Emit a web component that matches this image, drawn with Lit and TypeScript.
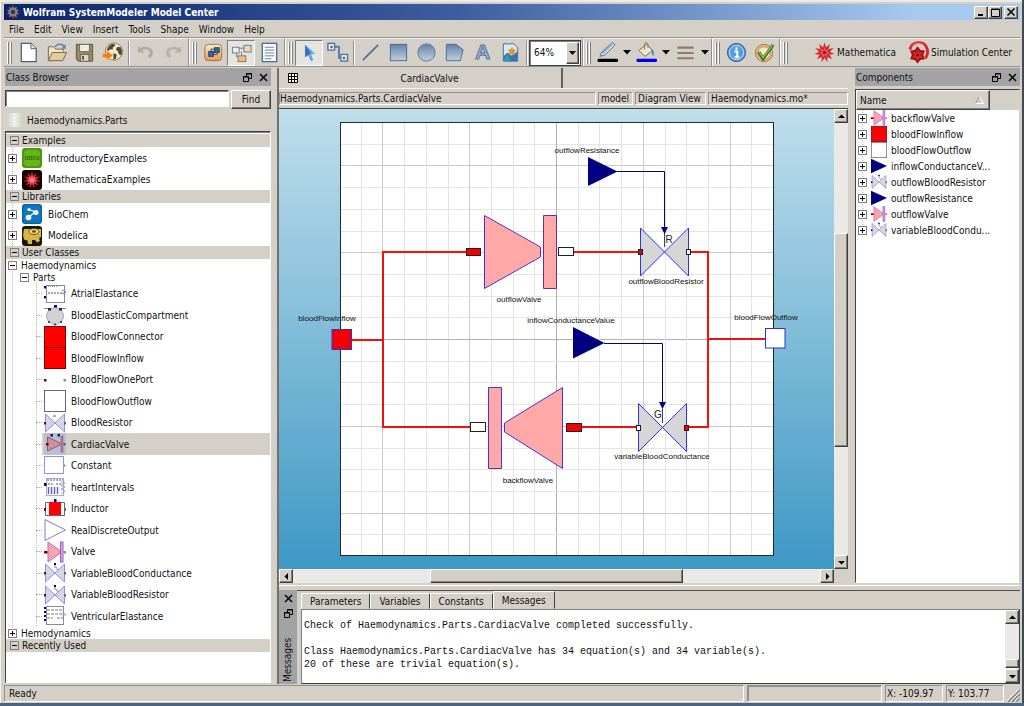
import { LitElement, html, svg, css, TemplateResult, SVGTemplateResult } from "lit";
import { customElement, property, state } from "lit/decorators.js";
import { classMap } from "lit/directives/class-map.js";

/* ---------- toolbar icons, 24 x 24 ---------- */
const shade = svg`<defs>
  <linearGradient id="steel" x1="0" y1="0" x2="0" y2="1"><stop offset="0" stop-color="#5f83aa"/><stop offset="1" stop-color="#c3d0de"/></linearGradient>
  <linearGradient id="tan" x1="0" y1="0" x2="0" y2="1"><stop offset="0" stop-color="#fbe9d0"/><stop offset="1" stop-color="#e39a55"/></linearGradient>
</defs>`;

const spikes = (cx: number, cy: number, r: number, inner: number, n: number): string =>
  Array.from({ length: n * 2 }, (_, i) => {
    const a = (Math.PI * i) / n - Math.PI / 2;
    const q = i % 2 ? inner : r;
    return `${(cx + q * Math.cos(a)).toFixed(2)},${(cy + q * Math.sin(a)).toFixed(2)}`;
  }).join(" ");

const toolIcons: Record<string, SVGTemplateResult> = {
  newfile: svg`<path d="M4.500 2.500H14.500L20 8V21.500H4.500Z" fill="#fff" stroke="#4a5f78" stroke-width="1.300"/><path d="M14.500 2.500V8H20" fill="#dbe5ee" stroke="#4a5f78"/>`,
  open: svg`<path d="M3.500 20.500V6H9l2 2.500h8V11" fill="#f3e6c4" stroke="#6c6a55"/><path d="M3.500 20.500L7.500 12H22.500L18.500 20.500Z" fill="#e4cb98" stroke="#6c6a55"/><path d="M10.500 6C13 2.500 18 2.500 20 5.500" fill="none" stroke="#5b80a8" stroke-width="1.500"/><path d="M21.500 3V8H17Z" fill="#5b80a8"/>`,
  save: svg`<path d="M3.500 3.500H20.500V21H5.500L3.500 19Z" fill="#958767" stroke="#5e543e"/><rect x="7" y="3.500" width="10" height="7.500" fill="#efece2" stroke="#5e543e" stroke-width=".7"/><rect x="8" y="14" width="8.500" height="7" fill="#dcd8c8" stroke="#5e543e" stroke-width=".7"/><rect x="9.500" y="15.500" width="2" height="4" fill="#5e543e"/>`,
  globe: svg`<circle cx="13.500" cy="11" r="9" fill="#f5ead0" stroke="#8c7c58"/><path d="M8 5.500C10 3.500 12 2.800 14 3L15 5L12.500 6.500L12 9L9.500 8.500L7.500 10.500L6 9Z" fill="#57482b"/><path d="M17 6L20.500 6.500C22 9 22.500 12 21 15L18.500 13.500L17.500 10.500L15.500 9Z" fill="#57482b"/><path d="M13 12.500L16.500 14L15.500 18.500L13 19.500Z" fill="#57482b"/><path d="M1.500 13H6V10L12.500 15L6 20.500V17.500H1.500Z" fill="#f77a18" stroke="#fbd0a0" stroke-width=".6"/>`,
  undo: svg`<path d="M4 5V12H11L8.500 9.500C12 7.500 16 8.500 16.500 12C16.500 14 15 15 14 15.500L16 18C19 16.500 20.500 14 19.500 10.500C18 6 11 4.500 6.500 7.500Z" fill="#adaba6"/>`,
  redo: svg`<path d="M20 5V12H13L15.500 9.500C12 7.500 8 8.500 7.500 12C7.500 14 9 15 10 15.500L8 18C5 16.500 3.500 14 4.500 10.500C6 6 13 4.500 17.500 7.500Z" fill="#b4b2ad"/>`,
  iconview: svg`<rect x="3" y="3.500" width="17.500" height="17" rx="3.500" fill="url(#tan)" stroke="#a2713f"/><rect x="7" y="11" width="5" height="5" fill="#3d648f" stroke="#24476d"/><rect x="13" y="7" width="5" height="5" fill="#3d648f" stroke="#24476d"/><path d="M9.500 11V8.500H13M12 14H16V12" fill="none" stroke="#24476d"/>`,
  diagview: svg`<path d="M7 11V16.500H11M9 7.500H15M12 15V11" fill="none" stroke="#5b7ea4"/><rect x="2.500" y="6.500" width="7" height="6" fill="#f8ecd9" stroke="#5b7ea4"/><rect x="14.500" y="4.500" width="7.500" height="7" fill="#f6d3a8" stroke="#5b7ea4"/><rect x="8.500" y="15.500" width="8" height="6" fill="#f1bd80" stroke="#8e7148"/>`,
  textview: svg`<rect x="4.500" y="2.500" width="15" height="19" fill="#fff" stroke="#4a6c92" stroke-width="1.400"/><path d="M7 6.500H17M7 9.500H17M7 12.500H17M7 15.500H17M7 18.500H14" stroke="#5b7ea4"/>`,
  select: svg`<path d="M7 3L7 18L10.500 15L13 21.500L16.500 20L14 14L18.500 13.500Z" fill="#5aa0e8" stroke="#dcebfa" stroke-width=".8"/><path d="M7.500 4L7.500 17L10.500 14.500L13 13Z" fill="#3b6fae"/>`,
  connect: svg`<path d="M8 6H13.500V17.500H17" fill="none" stroke="#5b7ea4" stroke-width="2"/><rect x="2" y="2.500" width="7" height="7" fill="#e8eff6" stroke="#4a6c92" stroke-width="1.300"/><rect x="4.500" y="5" width="2.500" height="2.500" fill="#4a6c92"/><rect x="15.500" y="14" width="7" height="7" fill="#e8eff6" stroke="#4a6c92" stroke-width="1.300"/><rect x="17.500" y="16.500" width="2.500" height="2.500" fill="#4a6c92"/>`,
  line: svg`<path d="M4 20L20 4" stroke="#4a6c92" stroke-width="1.600"/>`,
  rect: svg`<rect x="3.500" y="3.500" width="17" height="17" fill="url(#steel)" stroke="#4a6c92"/>`,
  ellipse: svg`<circle cx="12" cy="12" r="9" fill="url(#steel)" stroke="#54779f"/>`,
  polygon: svg`<path d="M3.500 3.500H13.500L21 9L18 20.500H3.500Z" fill="url(#steel)" stroke="#4a6c92"/>`,
  text: svg`<text class="glyph" x="12" y="19" text-anchor="middle">A</text>`,
  bitmap: svg`<path d="M4.500 3H15.500L19.500 7V21H4.500Z" fill="#d8e8f5" stroke="#4a6c92"/><path d="M4.500 16L9 12L13 15L19.500 11V21H4.500Z" fill="#3b73ad"/><path d="M4.500 20L9 14L12 21H4.500Z" fill="#2d9fb0"/><path d="M13.500 6L15 8.500L18 9L16 11.500L16.500 14.500L13.500 13.500L10.500 14.500L11 11.500L9 9L12 8.500Z" fill="#d99a2b"/>`,
  pen: svg`<path d="M4 16L6 11.500L17 1.500L20 4L9.500 14.500Z" fill="#d9e3ee" stroke="#56708e"/><path d="M6 12L16.500 2.500L18 3.500L7.500 13.500Z" fill="#8ea9c7"/><rect x="1.500" y="18.500" width="21.500" height="3.500" rx="1.500" fill="#000"/>`,
  bucket: svg`<path d="M4 10L12 3.500L18.500 10L10.500 16Z" fill="#f0e4cc" stroke="#7a6b4d"/><path d="M10 9V4C10 1 13 1 13.500 4V7" fill="none" stroke="#7a6b4d"/><path d="M17 8C20 9 20 13 19.500 15.500C17.500 15 17.500 11 17 8" fill="#4f86c6"/><rect x="1.500" y="18.500" width="21.500" height="3.500" rx="1.500" fill="#0000f0"/>`,
  lines: svg`<path d="M3.500 7H20.500M3.500 12.500H20.500M3.500 18H20.500" stroke="#8a7d66" stroke-width="2.300"/>`,
  info: svg`<circle cx="12" cy="12" r="9.500" fill="#4d8fd6" stroke="#2d5f9c"/><circle cx="12" cy="12" r="7.500" fill="#5a9ce0" stroke="#cfe2f6"/><path d="M12 6.500V9M10 11H12.800V17M10 17H15" stroke="#fff" stroke-width="2" fill="none"/>`,
  check: svg`<circle cx="11.500" cy="12.500" r="9" fill="#e8b77c" stroke="#a5753f"/><circle cx="11.500" cy="12.500" r="6.500" fill="#f7e6cd" stroke="#c18f55"/><path d="M6 11.500L10.500 18.500L21 4" fill="none" stroke="#2b6a1e" stroke-width="3.400"/><path d="M6.500 12L10.500 17.500L20.500 4.500" fill="none" stroke="#7ec04c" stroke-width="1.500"/>`,
  mathematica: svg`<polygon points=${spikes(12, 12, 10.5, 5.5, 11)} fill="#d4242a"/><polygon points=${spikes(12, 12, 6, 2.5, 7)} fill="#f0696a"/><circle cx="12" cy="12" r="2" fill="#b3161c"/>`,
  simcenter: svg`<path d="M3 9C5 0 18 -1 21 8C22.500 13 20 17 19 18" fill="none" stroke="#d8242a" stroke-width="3"/><path d="M5 6C8 1.500 15 1.500 18 5" fill="none" stroke="#f59a9a"/><polygon points=${spikes(11, 14.5, 9, 6, 6)} fill="#a51017"/><polygon points=${spikes(11, 14.5, 6, 3, 6)} fill="#d42a30"/><circle cx="11" cy="14.500" r="1.500" fill="#6e070b"/>`,
};

/* ---------- class icons, 22 x 22 ---------- */
const bowtie = (mark: SVGTemplateResult) => svg`
  <path d="M1.500 2L11 11L1.500 20ZM20.500 2L11 11L20.500 20Z" fill="#d6d6e2" stroke="#8f8ff0"/>
  <rect y="10" width="2" height="2.500" fill="#700"/><rect x="20" y="10" width="2" height="2.500" fill="#667"/>${mark}`;
const port = svg`<rect x="10" y="1" width="2" height="2" fill="#000080"/><path d="M11 3V6M12 5L14 8" stroke="#667" stroke-width=".8"/>`;

const classIcons: Record<string, SVGTemplateResult> = {
  intro: svg`<rect x="1" y="1" width="20" height="20" rx="3" fill="#4b9a0c"/><rect x="3" y="3" width="16" height="16" rx="4" fill="#68b41c"/><text class="mini" x="11" y="13" text-anchor="middle">intro</text>`,
  mathex: svg`<rect x="1" y="1" width="20" height="20" rx="3" fill="#160404"/><polygon points=${spikes(11, 11, 8.5, 4.2, 11)} fill="#e02a30"/><polygon points=${spikes(11, 11, 4.5, 2, 7)} fill="#f58a8a"/>`,
  biochem: svg`<rect x="1" y="1" width="20" height="20" rx="3" fill="#0c63a8"/><rect x="2.500" y="2.500" width="17" height="17" rx="3" fill="#1178c0"/><path d="M8 6.500L14.500 9L7.500 14" fill="none" stroke="#fff" stroke-width="1.200"/><circle cx="8" cy="6.500" r="1.600" fill="#fff"/><circle cx="15" cy="9.500" r="2.500" fill="#fff"/><circle cx="7.500" cy="14.500" r="2.800" fill="#fff"/>`,
  modelica: svg`<rect x="1" y="1" width="20" height="20" rx="3" fill="#1c1704"/><path d="M3 4H20V12L18 13L19 16L16 17.500L14 15H11L11 19L7 19L6.500 15.500L3 14.500L2 10Z" fill="#d5b545"/><ellipse cx="13" cy="6.500" rx="5" ry="3" fill="#efd98a" stroke="#6b5510"/><ellipse cx="13" cy="6.500" rx="2" ry="1.200" fill="#5b480c"/>`,
  atrial: svg`<rect x="2.500" y="2.500" width="18" height="17" fill="#fff" stroke="#889"/><path d="M4 10H18" stroke="#555" stroke-dasharray="2 1"/><path d="M4 3.500H13" stroke="#99a" stroke-dasharray="1 1"/><rect x="0" y="3" width="2" height="2.500" fill="#000080"/><rect x="0" y="13" width="2" height="2.500" fill="#000080"/><path d="M18 7L22 9L18 11" fill="none" stroke="#77f"/>`,
  elastic: svg`<path d="M0 4.500H22" stroke="#88a" stroke-dasharray="5 1"/><circle cx="11" cy="12" r="8.500" fill="#d2d2d2" stroke="#aaa"/><rect x="10" y="1" width="3" height="2.500" fill="#000080"/><rect x="4" y="4" width="3" height="2.500" fill="#24246a"/><rect x="15" y="4" width="3" height="2.500" fill="#24246a"/><rect x="4" y="17" width="2" height="2" fill="#447"/><rect x="16" y="17" width="2" height="2" fill="#447"/><rect x="10" y="19.500" width="2" height="2" fill="#447"/>`,
  red: svg`<rect x=".5" y=".5" width="21" height="21" fill="#f00" stroke="#700"/>`,
  oneport: svg`<rect x="0" y="10" width="2.500" height="2.500" fill="#700"/><rect x="19.500" y="10" width="2.500" height="2.500" fill="#88a"/>`,
  white: svg`<rect x=".5" y=".5" width="21" height="21" fill="#fff" stroke="#667"/>`,
  resistor: bowtie(svg`<rect x="9.500" y="3" width="2" height="2" fill="#88a"/>`),
  cardiac: svg`<rect width="22" height="22" fill="#b9bed0"/><rect x="6.500" y="1" width="2.500" height="2.500" fill="#12126a"/><rect x="13.500" y="1" width="2.500" height="2.500" fill="#12126a"/><path d="M3.500 4L16 10V12L3.500 18Z" fill="#cf8f9a" stroke="#8a5a80"/><rect x="17" y="3" width="2" height="16" fill="#b9788a" stroke="#806090" stroke-width=".6"/><rect x="2" y="10" width="2.500" height="2.500" fill="#700"/><rect x="19.500" y="10" width="2" height="2.500" fill="#557"/>`,
  constant: svg`<rect x=".5" y="1.500" width="19" height="17" fill="#fff" stroke="#8f8ff0"/><path d="M20 9L22 10.500L20 12Z" fill="#88a"/>`,
  heart: svg`<rect x="2.500" y="2.500" width="17" height="17" fill="#fff" stroke="#aac"/><path d="M3 4H19M4 8H10M12 8H18" stroke="#556" stroke-dasharray="2 1"/><path d="M4.500 11V18M7.500 11V18M10.500 11V18M13.500 11V18" stroke="#5a5ad8" stroke-width="1.400"/><path d="M17 6L21 7L17 9L21 11L17 13L21 15L17 18" fill="none" stroke="#9a9af0"/><rect x="0" y="7" width="2.500" height="3" fill="#000080"/>`,
  inductor: svg`<path d="M1.500 4.500H20.500V17.500H1.500Z" fill="#fff" stroke="#667"/><rect x="5" y="4" width="12" height="13" fill="#f00"/><rect x="10" y="1" width="2.500" height="3" fill="#000080"/><rect x="0" y="10" width="2" height="3" fill="#700"/><rect x="20" y="10" width="2" height="3" fill="#667"/>`,
  discrete: svg`<path d="M1 .500L21.500 11L1 21.500Z" fill="#fff" stroke="#7f7fc8"/>`,
  valve: svg`<path d="M4 1L16 9.500V12.500L4 21Z" fill="#f9a3aa" stroke="#b070d8"/><rect x="16.500" y="1" width="2.500" height="20" fill="#f9a3aa" stroke="#8a60e8"/><rect x="0" y="10" width="3.500" height="2.500" fill="#700"/><rect x="19.500" y="10" width="2.500" height="2.500" fill="#88a"/>`,
  varbow: bowtie(port),
  ventricular: svg`<rect x="2.500" y="1.500" width="17" height="18" fill="#fff" stroke="#889"/><path d="M3 5H19M3 9H19M3 13H9M13 13H19" stroke="#777" stroke-dasharray="3 1"/><path d="M1 2V17" stroke="#000080" stroke-width="2" stroke-dasharray="2 2"/><path d="M18 8L22 9.500L18 11" fill="none" stroke="#99f"/>`,
  navy: svg`<path d="M0 1L22 11L0 21Z" fill="#000080"/>`,
};

const drawIcon = (name: string, cls: string) =>
  html`<svg class=${cls} viewBox="0 0 22 22" aria-hidden="true">${classIcons[name]}</svg>`;

const baseStyles = css`
  :host, * { box-sizing: border-box; }
  button, input, select { font: inherit; color: inherit; margin: 0; padding: 0; border-radius: 0; }
  button { background: none; border: 0; }
  ul { list-style: none; margin: 0; padding: 0; }
  svg { display: block; flex: none; }
  .raised { background: #d4d0c8; border: 1px solid; border-color: #fff #404040 #404040 #fff; box-shadow: inset -1px -1px #808080; }
  .exp { width: 9px; height: 9px; flex: none; border: 1px solid #808080; background: #fff; display: grid; place-items: center; }
  .mini { font: 8px "Liberation Serif", serif; fill: #1d4a04; }
`;

const expander = (open: boolean) => html`<button class="exp" aria-label=${open ? "Collapse" : "Expand"}>
  <svg width="5" height="5" viewBox="0 0 5 5"><path d=${open ? "M0 2.500H5" : "M0 2.500H5M2.500 0V5"} stroke="#000"/></svg>
</button>`;

/* ---------- dock title ---------- */
@customElement("dock-title")
export class DockTitle extends LitElement {
  @property() label = "";
  @property({ type: Boolean, reflect: true }) vertical = false;

  static styles = [baseStyles, css`
    :host { display: flex; align-items: center; gap: 7px; height: 18px; padding: 0 3px 0 1px; background: #a3a3a3; }
    .name { flex: 1; }
    button { width: 9px; height: 9px; }
    :host([vertical]) { flex-direction: column; gap: 6px; width: 18px; height: auto; padding: 4px 0 2px; }
    :host([vertical]) .name { order: 3; writing-mode: vertical-rl; transform: rotate(180deg); line-height: 18px; }
    :host([vertical]) .close { order: 1; }
    :host([vertical]) .float { order: 2; }
  `];

  render() {
    return html`<span class="name">${this.label}</span>
      <button class="float" aria-label="Float"><svg width="9" height="9" viewBox="0 0 9 9"><path d="M3.500 3V.500H8.500V5.500H6M3 1H9" fill="none" stroke="#000"/><path d="M.500 3.500H5.500V8.500H.500ZM0 4H6" fill="none" stroke="#000"/></svg></button>
      <button class="close" aria-label="Close"><svg width="9" height="9" viewBox="0 0 9 9"><path d="M1 1L8 8M8 1L1 8" stroke="#000" stroke-width="1.500"/></svg></button>`;
  }
}

/* ---------- scroll bar ---------- */
@customElement("scroll-bar")
export class ScrollBar extends LitElement {
  @property({ type: Boolean, reflect: true }) horizontal = false;
  @property({ type: Number }) before = 0;
  @property({ type: Number }) size = 50;
  @property({ type: Number }) after = 50;

  static styles = [baseStyles, css`
    :host { display: flex; flex-direction: column; width: 14px; background: #ebe9e5; }
    :host([horizontal]) { flex-direction: row; width: auto; height: 14px; }
    .end { width: 14px; height: 14px; flex: none; display: grid; place-items: center; }
    .track { flex: 1; display: flex; flex-direction: inherit; min-width: 0; min-height: 0; }
  `];

  private arrow(d: string) {
    return html`<svg width="7" height="7" viewBox="0 0 7 7"><path d=${d} fill="#000"/></svg>`;
  }

  render() {
    const h = this.horizontal;
    return html`<button class="end raised" aria-label="Scroll back">${this.arrow(h ? "M5 0V7L1.500 3.500Z" : "M0 5H7L3.500 1.500Z")}</button>
      <div class="track">
        <div style="flex:${this.before}"></div><div class="raised" style="flex:${this.size}"></div><div style="flex:${this.after}"></div>
      </div>
      <button class="end raised" aria-label="Scroll forward">${this.arrow(h ? "M2 0V7L5.500 3.500Z" : "M0 2H7L3.500 5.500Z")}</button>`;
  }
}

/* ---------- class browser ---------- */
const classes: [string, string][] = [
  ["atrial", "AtrialElastance"], ["elastic", "BloodElasticCompartment"], ["red", "BloodFlowConnector"],
  ["red", "BloodFlowInflow"], ["oneport", "BloodFlowOnePort"], ["white", "BloodFlowOutflow"],
  ["resistor", "BloodResistor"], ["cardiac", "CardiacValve"], ["constant", "Constant"],
  ["heart", "heartIntervals"], ["inductor", "Inductor"], ["discrete", "RealDiscreteOutput"],
  ["valve", "Valve"], ["varbow", "VariableBloodConductance"], ["varbow", "VariableBloodResistor"],
  ["ventricular", "VentricularElastance"],
];

@customElement("class-browser")
export class ClassBrowser extends LitElement {
  @state() private selected = "CardiacValve";

  static styles = [baseStyles, css`
    :host { display: flex; flex-direction: column; }
    .search { display: flex; gap: 2px; height: 19px; margin-top: 4px; }
    .search input { flex: 1; min-width: 0; height: 17px; padding: 0 3px; background: #fff; border: 1px solid; border-color: #404040 #fff #fff #404040; box-shadow: inset 1px 1px #808080; outline: 0; }
    .search button { width: 40px; }
    .scope { display: flex; align-items: center; gap: 5px; height: 22px; padding-left: 2px; }
    .swatch { width: 15px; height: 14px; background: linear-gradient(90deg, #d4d0c8, #f2f1ee, #d4d0c8); }
    .tree { flex: 1; min-height: 0; overflow: hidden; background: #fff; border: 1px solid; border-color: #404040 #fff #fff #404040; box-shadow: inset 0 1px #808080; padding-top: 2px; }
    .section { display: flex; align-items: center; gap: 3px; height: 13px; padding-left: 4px; background: #d4d0c8; }
    .section .exp { background: #d4d0c8; }
    .lib { display: flex; align-items: center; height: 21px; padding-left: 2px; }
    .lib:first-child { height: 22px; }
    .lib .icon { width: 22px; height: 22px; margin: 0 5px 0 4px; }
    .rail { background: linear-gradient(#bbb 50%, transparent 50%) 6px 0 / 1px 2px repeat-y; }
    .pack { display: flex; align-items: center; gap: 4px; height: 12px; padding-left: 2px; }
    .inner { padding-left: 14px; }
    .leaves { padding-left: 30px; background: linear-gradient(#bbb 50%, transparent 50%) 30px 0 / 1px 2px repeat-y; }
    .leaf { display: flex; align-items: center; height: 22px; }
    .leaf:nth-child(odd) { height: 21px; }
    .leaf::before { content: ""; width: 6px; border-top: 1px dotted #aaa; }
    .pick { flex: 1; align-self: stretch; display: flex; align-items: center; gap: 5px; padding-left: 2px; text-align: left; }
    .pick.on { background: #d4d0c8; }
    .pick .icon { width: 22px; height: 22px; }
  `];

  private section(name: string) {
    return html`<div class="section">${expander(true)}<span>${name}</span></div>`;
  }
  private lib(icon: string, name: string) {
    return html`<li class="lib">${expander(false)}${drawIcon(icon, "icon")}<span>${name}</span></li>`;
  }

  render() {
    return html`<dock-title label="Class Browser"></dock-title>
      <div class="search"><input type="text" aria-label="Search classes" /><button class="raised">Find</button></div>
      <div class="scope"><span class="swatch"></span><span>Haemodynamics.Parts</span></div>
      <div class="tree">
        ${this.section("Examples")}
        <ul class="rail">${this.lib("intro", "IntroductoryExamples")}${this.lib("mathex", "MathematicaExamples")}</ul>
        ${this.section("Libraries")}
        <ul class="rail">${this.lib("biochem", "BioChem")}${this.lib("modelica", "Modelica")}</ul>
        ${this.section("User Classes")}
        <div class="rail">
          <div class="pack">${expander(true)}<span>Haemodynamics</span></div>
          <div class="pack inner">${expander(true)}<span>Parts</span></div>
          <ul class="leaves">
            ${classes.map(([icon, name]) => html`<li class="leaf">
              <button class=${classMap({ pick: true, on: name === this.selected })} @click=${() => (this.selected = name)}>${drawIcon(icon, "icon")}<span>${name}</span></button>
            </li>`)}
          </ul>
          <div class="pack">${expander(false)}<span>Hemodynamics</span></div>
        </div>
        ${this.section("Recently Used")}
      </div>`;
  }
}

/* ---------- component list ---------- */
const components: [string, string][] = [
  ["valve", "backflowValve"], ["red", "bloodFlowInflow"], ["white", "bloodFlowOutflow"],
  ["navy", "inflowConductanceV..."], ["varbow", "outflowBloodResistor"], ["navy", "outflowResistance"],
  ["valve", "outflowValve"], ["varbow", "variableBloodCondu..."],
];

@customElement("component-list")
export class ComponentList extends LitElement {
  static styles = [baseStyles, css`
    :host { display: flex; flex-direction: column; }
    .box { flex: 1; margin-top: 3px; min-height: 0; overflow: hidden; background: #fff; border: 1px solid; border-color: #404040 #d4d0c8 #fff #404040; }
    .head { display: flex; height: 20px; background: #d4d0c8; }
    .head button { flex: 0 1 134px; display: flex; align-items: center; justify-content: space-between; padding: 0 5px 0 3px; }
    .row { display: flex; align-items: center; height: 16px; padding-left: 2px; background: linear-gradient(#bbb 50%, transparent 50%) 6px 0 / 1px 2px repeat-y; white-space: nowrap; }
    .icon { width: 16px; height: 16px; margin: 0 4px; }
  `];

  render() {
    return html`<dock-title label="Components"></dock-title>
      <div class="box">
        <div class="head"><button class="raised">Name<svg width="9" height="8" viewBox="0 0 9 8"><path d="M.500 7.500L4.500 .500" stroke="#999"/><path d="M4.500 .500L8.500 7.500H.500" fill="none" stroke="#fff"/></svg></button></div>
        <ul>${components.map(([icon, name]) => html`<li class="row">${expander(false)}${drawIcon(icon, "icon")}<span>${name}</span></li>`)}</ul>
      </div>`;
  }
}

/* ---------- diagram canvas ---------- */
@customElement("model-diagram")
export class ModelDiagram extends LitElement {
  static styles = css`
    :host { display: flex; justify-content: center; align-items: center; overflow: hidden; background: linear-gradient(#c0deec, #3d98c4); }
    svg { display: block; flex: none; width: 553px; height: 460px; }
    .label { font: 8px "Liberation Sans", sans-serif; text-anchor: middle; fill: #111; }
    .letter { font: 10px "Liberation Sans", sans-serif; text-anchor: middle; fill: #222; }
    .flow { fill: none; stroke: #f01010; stroke-width: 2; }
    .signal { fill: none; stroke: #000080; }
    .valve { fill: #ffa8a8; stroke: #5030d0; }
    .bow { fill: #d6d6d6; stroke: #3030f0; }
    .navy { fill: #000080; }
    .pin { stroke: #202020; }
    .end { stroke: #3030d0; }
    .red { fill: #f50000; }
    .white { fill: #fff; }
  `;

  private grid() {
    const step = 434 / 20;
    return Array.from({ length: 19 }, (_, k) => {
      const i = k + 1;
      const x = Math.round(340 + i * step) - 0.5;
      const y = Math.round(122 + i * step) + 0.5;
      const tone = i === 10 ? "#b0b0b0" : i % 4 === 2 ? "#cacaca" : "#e4e4e4";
      return svg`<path d="M${x} 123V555M341 ${y}H773" stroke=${tone} fill="none"/>`;
    });
  }
  private bow(cx: number, cy: number) {
    return svg`<path class="bow" d="M${cx - 24} ${cy - 24}L${cx} ${cy}L${cx - 24} ${cy + 24}ZM${cx + 24} ${cy - 24}L${cx} ${cy}L${cx + 24} ${cy + 24}Z"/>`;
  }

  render() {
    return html`<svg viewBox="280 109 553 460" role="img" aria-label="CardiacValve diagram">
      <rect x="340.500" y="122.500" width="433" height="433" fill="#fff"/>
      ${this.grid()}
      <rect x="340.500" y="122.500" width="433" height="433" fill="none" stroke="#202830"/>
      <path class="flow" d="M466 252H383V427H470M352 340H383M574 252H640M689 252H708V427H687M708 339H765M581 427H639"/>
      <path class="signal" d="M617 171.500H664.500V228M604 343.500H662.500V403"/>
      <path class="valve" d="M484.500 215.500L540.500 247V257L484.500 288.500ZM543.500 215.500H556.500V288.500H543.500Z"/>
      <path class="valve" d="M562.500 387.500L504.500 423V432L562.500 468.500ZM488.500 387.500H501.500V468.500H488.500Z"/>
      ${this.bow(664.5, 252)}${this.bow(662.5, 427.5)}
      <path d="M664.500 233V247M662.500 409V423" stroke="#444"/>
      <path class="navy" d="M588 157L617.500 171.500L588 186ZM573 327L604.500 343L573 358.500ZM661 227H668L664.500 234ZM659 402H666L662.500 409Z"/>
      <rect class="pin red" x="466.500" y="248.500" width="14" height="7"/>
      <rect class="pin white" x="558.500" y="247.500" width="15" height="8"/>
      <rect class="pin white" x="470.500" y="422.500" width="15" height="9"/>
      <rect class="pin red" x="566.500" y="423.500" width="15" height="8"/>
      <rect class="pin red" x="638.500" y="249.500" width="4" height="5"/>
      <rect class="pin white" x="686.500" y="249.500" width="4" height="5"/>
      <rect class="pin white" x="636.500" y="425.500" width="4" height="5"/>
      <rect class="pin red" x="684.500" y="425.500" width="4" height="5"/>
      <rect class="end red" x="332" y="329.500" width="19.500" height="20"/>
      <rect class="end white" x="765.500" y="328.500" width="19.500" height="19.500"/>
      <text class="label" x="587" y="153">outflowResistance</text>
      <text class="label" x="519" y="302">outflowValve</text>
      <text class="label" x="666" y="284">outflowBloodResistor</text>
      <text class="label" x="327" y="321">bloodFlowInflow</text>
      <text class="label" x="571" y="323">inflowConductanceValue</text>
      <text class="label" x="766" y="320">bloodFlowOutflow</text>
      <text class="label" x="528" y="483">backflowValve</text>
      <text class="label" x="662" y="459">variableBloodConductance</text>
      <text class="letter" x="669" y="243">R</text>
      <text class="letter" x="658" y="418">G</text>
    </svg>`;
  }
}

/* ---------- main window ---------- */
@customElement("app-root")
export class AppRoot extends LitElement {
  @state() private tab = "Messages";

  static styles = [baseStyles, css`
    :host { display: flex; flex-direction: column; height: 100vh; overflow: hidden; background: #d4d0c8; color: #111; font: 10px/13px "DejaVu Sans Condensed", "Noto Sans", sans-serif; padding: 4px 4px 0; border-bottom: 3px solid #4b6480; box-shadow: inset 1px 0 #f4f3f0, inset -2px 0 #404a55, inset 0 2px #eceae6; white-space: nowrap; }
    .title { flex: none; display: flex; align-items: center; gap: 3px; height: 16px; padding: 0 2px; color: #fff; font-weight: bold; background: linear-gradient(90deg, #0a246a, #3d5ea0 45%, #a6caf0 90%); }
    .title h1 { flex: 1; font: inherit; margin: 0; }
    .winbtns { display: flex; }
    .winbtns button { width: 14px; height: 13px; display: grid; place-items: center; }
    .winbtns button:last-child { margin-left: 2px; }
    .menu { flex: none; display: flex; gap: 10px; height: 17px; padding: 2px 5px 0; }
    .menu button { line-height: 14px; }
    .toolbar { flex: none; display: flex; height: 30px; border-top: 1px solid #909090; border-bottom: 1px solid #909090; }
    .group { display: flex; align-items: center; padding: 0 1px 0 2px; border-left: 1px solid #fff; border-right: 1px solid #909090; border-top: 1px solid #f4f3f0; }
    .group:first-child { border-left-color: transparent; }
    .group.last { flex: 1; border-right: 0; }
    .grip { width: 5px; height: 22px; margin-right: 2px; background: linear-gradient(90deg, #fff 1px, #808080 1px 2px, transparent 2px 3px, #fff 3px 4px, #808080 4px); }
    .tool { width: 28px; height: 26px; display: flex; align-items: center; justify-content: center; }
    .tool svg, .launch svg { width: 23px; height: 23px; }
    .tool.on { background: #e6e4df; border: 1px solid; border-color: #808080 #fff #fff #808080; }
    .tool.wide { width: 39px; justify-content: flex-start; gap: 4px; padding-left: 3px; }
    .tool.wide .arrow { width: 8px; height: 5px; }
    .glyph { font: bold 22px "Liberation Sans", sans-serif; fill: #9bb3ce; stroke: #54779f; }
    .sep { width: 5px; height: 24px; background: linear-gradient(90deg, transparent 2px, #909090 2px 3px, #fff 3px 4px, transparent 4px); }
    .zoom { position: relative; width: 52px; height: 26px; background: #fff; border: 1px solid #404040; box-shadow: inset 1px 1px #808080; }
    .zoom select { width: 100%; height: 100%; padding-left: 4px; appearance: none; border: 0; background: transparent; outline: 0; }
    .zoom .drop { position: absolute; top: 1px; right: 1px; bottom: 1px; width: 13px; display: grid; place-items: center; pointer-events: none; }
    .launchers { margin-left: auto; display: flex; gap: 11px; padding-right: 7px; }
    .launch { display: flex; align-items: center; gap: 1px; }

    .main { flex: 1; min-height: 0; display: flex; gap: 6px; padding: 1px 0 0 1px; }
    class-browser { flex: 0 0 266px; padding-bottom: 1px; }
    .work { flex: 1; min-width: 0; display: flex; flex-direction: column; border-left: 2px solid #707070; }
    .upper { flex: 1; min-height: 0; display: flex; gap: 7px; }
    .editor { flex: 1; min-width: 0; display: flex; flex-direction: column; }
    component-list { flex: 0 0 165px; }
    .tabbar { flex: none; display: flex; height: 20px; }
    .doctab { flex: 0 1 284px; display: flex; align-items: center; padding-left: 9px; border-right: 2px solid #606060; }
    .doctab span { flex: 1; text-align: center; }
    .info { flex: none; display: flex; gap: 2px; height: 21px; padding: 3px 0; border-top: 1px solid #f4f3f0; border-bottom: 1px solid #404040; }
    .cell { padding: 0 2px; border: 1px solid; border-color: #909090 #fff #fff #909090; }
    .info .cell { line-height: 12px; }
    .info .path { flex: 1; padding: 0; }
    .info .kind { flex: 0 0 35px; }
    .info .view { flex: 0 0 71px; }
    .info .file { flex: 0 0 140px; }
    .canvas { flex: 1; min-height: 0; display: grid; grid-template: minmax(0, 1fr) 14px / minmax(0, 1fr) 14px; }
    .bottom { flex: none; display: flex; height: 99px; margin-top: 2px; padding-top: 4px; border-top: 1px solid #fff; }
    .bottom dock-title { flex: none; }
    .pane { flex: 1; min-width: 0; display: flex; flex-direction: column; border-top: 1px solid #505050; padding-left: 4px; }
    .tabs { flex: none; display: flex; height: 18px; align-items: flex-end; }
    .tab { height: 16px; padding: 0 8px; border: 1px solid; border-color: #fff #404040 transparent #fff; border-radius: 2px 2px 0 0; }
    .tab.on { height: 18px; }
    .log { flex: 1; min-height: 0; display: flex; background: #fff; border: 1px solid; border-color: #808080 #404040 #404040 #808080; }
    .log pre { flex: 1; margin: 0; padding: 9px 2px 0; overflow: hidden; font: 10px/13px "Liberation Mono", monospace; }
    .status { flex: none; display: flex; gap: 3px; height: 19px; padding: 1px 0; }
    .status .cell { line-height: 15px; }
    .status .ready { flex: 1; padding-left: 4px; }
    .status .progress { flex: 0 0 135px; box-shadow: inset 1px 1px #909090; }
    .status .coord { flex: 0 0 58px; padding: 0 1px; }
    .status svg { align-self: flex-end; }
  `];

  private tool(name: string, on = false): TemplateResult {
    return html`<button class=${classMap({ tool: true, on })} aria-label=${name}><svg viewBox="0 0 24 24">${shade}${toolIcons[name]}</svg></button>`;
  }
  private wide(name: string) {
    return html`<button class="tool wide" aria-label=${name}><svg viewBox="0 0 24 24">${toolIcons[name]}</svg><svg class="arrow" viewBox="0 0 8 5"><path d="M0 0H8L4 4.500Z"/></svg></button>`;
  }
  private launch(icon: string, name: string) {
    return html`<button class="launch"><svg viewBox="0 0 24 24">${toolIcons[icon]}</svg>${name}</button>`;
  }

  render() {
    const grip = html`<span class="grip"></span>`;
    const sep = html`<span class="sep"></span>`;
    return html`
      <header class="title">
        <svg width="14" height="14" viewBox="0 0 24 24"><polygon points=${spikes(12, 12, 11, 7, 10)} fill="#8b8790" stroke="#4c4650"/><circle cx="12" cy="12" r="4" fill="#3a3440"/><path d="M5 19L20 21" stroke="#a03040" stroke-width="2"/></svg>
        <h1>Wolfram SystemModeler Model Center</h1>
        <div class="winbtns">
          <button class="raised" aria-label="Minimize"><svg width="8" height="8" viewBox="0 0 8 8"><path d="M1 7H6" stroke="#000" stroke-width="2"/></svg></button>
          <button class="raised" aria-label="Maximize"><svg width="9" height="9" viewBox="0 0 9 9"><path d="M.500 1H8.500V8.500H.500ZM0 1.500H9" fill="none" stroke="#000"/></svg></button>
          <button class="raised" aria-label="Close window"><svg width="8" height="8" viewBox="0 0 8 8"><path d="M.500 .500L7.500 7.500M7.500 .500L.500 7.500" stroke="#000" stroke-width="1.500"/></svg></button>
        </div>
      </header>
      <nav class="menu">${["File", "Edit", "View", "Insert", "Tools", "Shape", "Window", "Help"].map((m) => html`<button>${m}</button>`)}</nav>
      <div class="toolbar">
        <div class="group">${grip}${["newfile", "open", "save", "globe"].map((t) => this.tool(t))}${sep}${this.tool("undo")}${this.tool("redo")}</div>
        <div class="group">${grip}${this.tool("iconview")}${this.tool("diagview", true)}${this.tool("textview")}</div>
        <div class="group">${grip}${this.tool("select", true)}${this.tool("connect")}${sep}
          ${["line", "rect", "ellipse", "polygon", "text", "bitmap"].map((t) => this.tool(t))}${sep}
          <div class="zoom"><select aria-label="Zoom"><option>64%</option><option>100%</option></select>
            <span class="drop raised"><svg width="7" height="4" viewBox="0 0 7 4"><path d="M0 0H7L3.500 4Z"/></svg></span></div>
        </div>
        <div class="group">${grip}${this.wide("pen")}${this.wide("bucket")}${this.wide("lines")}</div>
        <div class="group">${grip}${this.tool("info")}${this.tool("check")}</div>
        <div class="group last">${grip}<div class="launchers">${this.launch("mathematica", "Mathematica")}${this.launch("simcenter", "Simulation Center")}</div></div>
      </div>
      <main class="main">
        <class-browser></class-browser>
        <section class="work">
          <div class="upper">
            <div class="editor">
              <div class="tabbar"><button class="doctab"><svg width="10" height="10" viewBox="0 0 10 10"><path d="M.500 .500H9.500V9.500H.500ZM3.500 0V10M6.500 0V10M0 3.500H10M0 6.500H10" fill="#fff" stroke="#000"/></svg><span>CardiacValve</span></button></div>
              <div class="info"><span class="cell path">Haemodynamics.Parts.CardiacValve</span><span class="cell kind">model</span><span class="cell view">Diagram View</span><span class="cell file">Haemodynamics.mo*</span></div>
              <div class="canvas">
                <model-diagram></model-diagram>
                <scroll-bar .before=${110} .size=${213} .after=${108}></scroll-bar>
                <scroll-bar horizontal .before=${137} .size=${251} .after=${137}></scroll-bar>
              </div>
            </div>
            <component-list></component-list>
          </div>
          <div class="bottom">
            <dock-title vertical label="Messages"></dock-title>
            <div class="pane">
              <div class="tabs">${["Parameters", "Variables", "Constants", "Messages"].map((t) => html`<button class=${classMap({ tab: true, on: t === this.tab })} @click=${() => (this.tab = t)}>${t}</button>`)}</div>
              <div class="log"><pre>${"Check of Haemodynamics.Parts.CardiacValve completed successfully.\n\nClass Haemodynamics.Parts.CardiacValve has 34 equation(s) and 34 variable(s).\n20 of these are trivial equation(s)."}</pre>
                <scroll-bar .before=${36} .size=${7} .after=${1}></scroll-bar></div>
            </div>
          </div>
        </section>
      </main>
      <footer class="status">
        <span class="cell ready">Ready</span><span class="cell progress"></span><span class="cell coord">X: -109.97</span><span class="cell coord">Y: 103.77</span>
        <svg width="13" height="13" viewBox="0 0 13 13"><path d="M1 13L13 1M5 13L13 5M9 13L13 9" stroke="#808080" stroke-width="1.500"/><path d="M0 12L12 0M4 12L12 4M8 12L12 8" stroke="#fff"/></svg>
      </footer>`;
  }
}
